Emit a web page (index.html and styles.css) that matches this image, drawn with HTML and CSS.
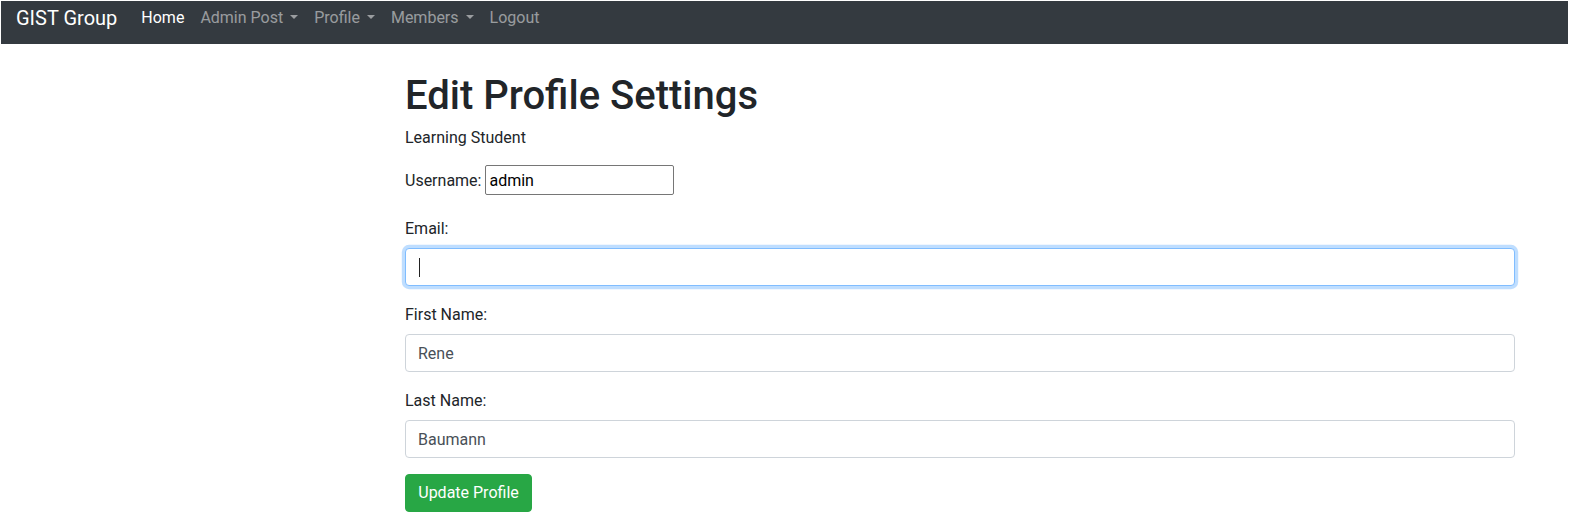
FILE: index.html
```html
<!DOCTYPE html>
<html lang="en">
<head>
<meta charset="utf-8">
<title>Edit Profile Settings</title>
<link rel="stylesheet" href="styles.css">
</head>
<body>
<nav class="navbar">
  <a class="brand" href="#">GIST Group</a>
  <ul class="nav">
    <li><a class="nav-link active" href="#">Home</a></li>
    <li><a class="nav-link toggle" href="#">Admin Post</a></li>
    <li><a class="nav-link toggle" href="#">Profile</a></li>
    <li><a class="nav-link toggle" href="#">Members</a></li>
    <li><a class="nav-link" href="#">Logout</a></li>
  </ul>
</nav>
<main class="container">
  <h1 class="title">Edit Profile Settings</h1>
  <p class="subtitle">Learning Student</p>
  <form class="form">
    <div class="user-row">
      <label for="username">Username:</label>
      <input id="username" class="plain-input" type="text" value="admin">
    </div>
    <div class="form-group">
      <label class="label" for="email">Email:</label>
      <div class="field-wrap">
        <input id="email" class="form-control focused" type="text" value="">
        <span class="caret"></span>
      </div>
    </div>
    <div class="form-group">
      <label class="label" for="first">First Name:</label>
      <input id="first" class="form-control" type="text" value="Rene">
    </div>
    <div class="form-group">
      <label class="label" for="last">Last Name:</label>
      <input id="last" class="form-control" type="text" value="Baumann">
    </div>
    <button class="btn-success" type="button">Update Profile</button>
  </form>
</main>
</body>
</html>
```
FILE: styles.css
```css
* { box-sizing: border-box; }
html, body { margin: 0; }
body {
  padding: 1px 4px 0 1px;
  font-family: Roboto, "Liberation Sans", sans-serif;
  font-size: 16px;
  line-height: 24px;
  color: #212529;
  background: #fff;
}
.navbar {
  display: flex;
  align-items: flex-start;
  height: 43px;
  padding: 2px 16px 0 15px;
  background: #343a40;
}
.brand {
  font-size: 20px;
  line-height: 30px;
  color: #fff;
  text-decoration: none;
  margin-right: 16px;
}
.nav {
  display: flex;
  list-style: none;
  margin: 3px 0 0;
  padding: 0;
}
.nav-link {
  display: block;
  padding: 0 8px;
  color: rgba(255,255,255,.5);
  text-decoration: none;
  line-height: 24px;
}
.nav-link.active { color: #fff; }
.toggle::after {
  content: "";
  display: inline-block;
  margin-left: 7px;
  vertical-align: 4px;
  border-top: 4.8px solid;
  border-left: 4.8px solid transparent;
  border-right: 4.8px solid transparent;
}
.container {
  width: 1110px;
  margin: 25px 0 0 404px;
}
.title {
  margin: 0 0 5px;
  padding-top: 3px;
  font-size: 40px;
  line-height: 48px;
  font-weight: 500;
}
.subtitle {
  margin: 0 0 16px;
  padding-top: 1px;
  line-height: 23px;
}
.user-row {
  display: flex;
  align-items: flex-start;
  gap: 4px;
  height: 35px;
  margin-bottom: 16px;
}
.user-row label { line-height: 30px; padding-top: 1px; }
.plain-input {
  width: 189px;
  height: 30px;
  padding: 1px 3px;
  border: 1px solid #767676;
  border-radius: 2px;
  font: inherit;
  color: #000;
}
.form-group { margin-bottom: 16px; }
.label {
  display: block;
  margin-bottom: 8px;
  padding-top: 1px;
  line-height: 23px;
}
.field-wrap { position: relative; }
.form-control {
  display: block;
  width: 100%;
  height: 38px;
  padding: 6px 12px;
  border: 1px solid #ced4da;
  border-radius: 4px;
  font: inherit;
  color: #495057;
  background: #fff;
  outline: none;
}
.form-control.focused {
  border-color: #80bdff;
  box-shadow: 0 0 0 3.2px rgba(0,123,255,.25);
}
.caret {
  position: absolute;
  left: 14px;
  top: 10px;
  width: 1px;
  height: 19px;
  background: #222;
}
.btn-success {
  display: inline-block;
  width: 127px;
  height: 38px;
  padding: 6px 12px;
  border: 1px solid #28a745;
  border-radius: 4px;
  background: #28a745;
  color: #fff;
  font: inherit;
  cursor: pointer;
}
```
